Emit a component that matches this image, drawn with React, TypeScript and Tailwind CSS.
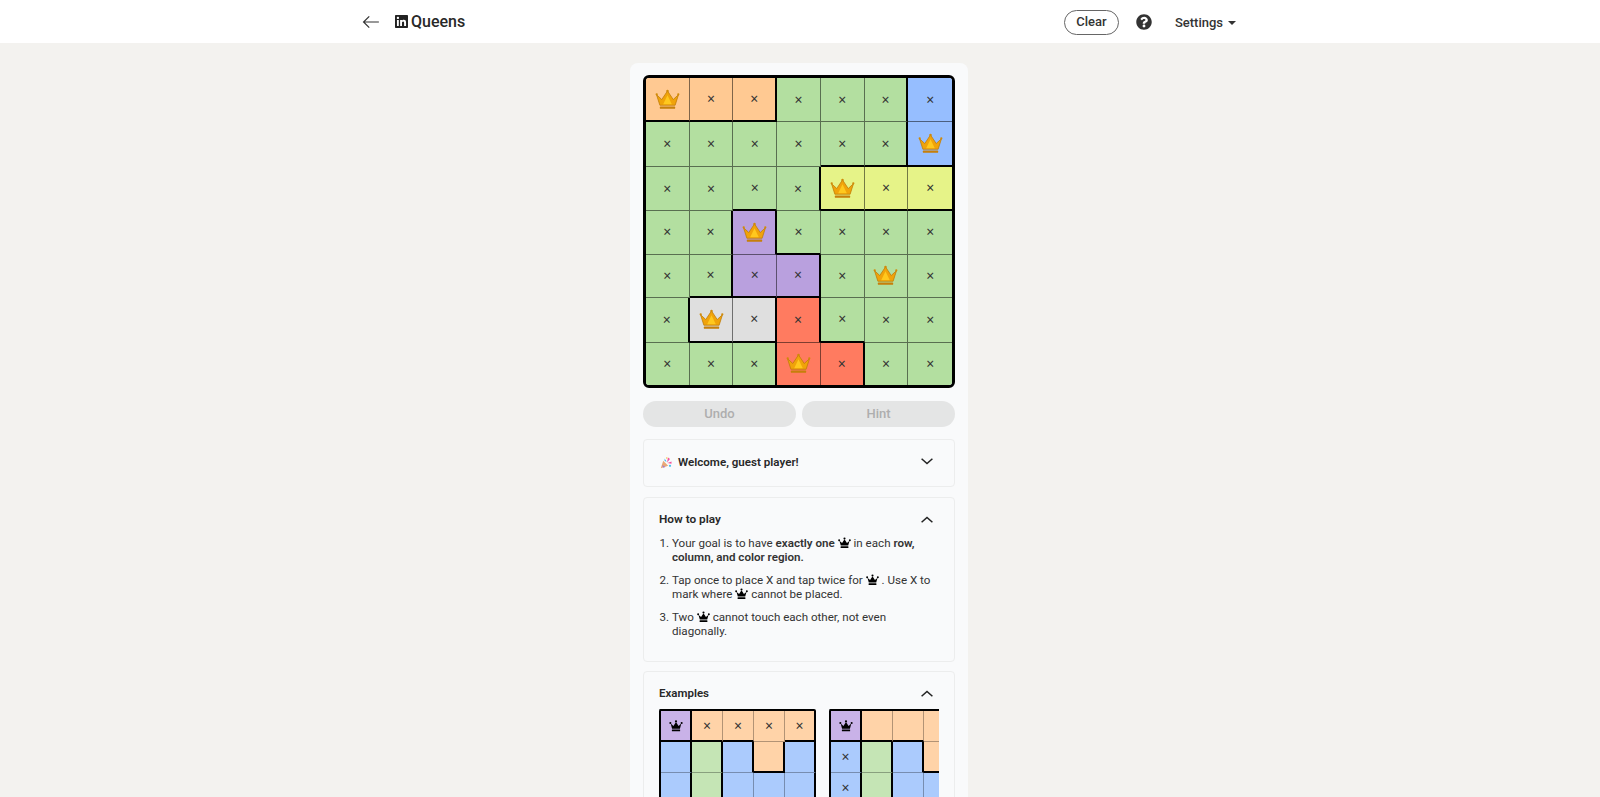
import React from 'react';

const GOLD_BOARD = [
  'OOOGGGB',
  'GGGGGGB',
  'GGGGYYY',
  'GGPGGGG',
  'GGPPGGG',
  'GWWRGGG',
  'GGGRRGG',
];
const GOLD_QUEENS = ['0,0', '1,6', '2,4', '3,2', '4,5', '5,1', '6,3'];

const EX_ROWS = ['POOOO', 'BGBOB', 'BGBBB'];

const bgFor: Record<string, string> = {
  O: 'bg-[#ffc992]',
  G: 'bg-[#b3dfa0]',
  B: 'bg-[#96beff]',
  Y: 'bg-[#e6f388]',
  P: 'bg-[#b9a0de]',
  W: 'bg-[#dfdfdf]',
  R: 'bg-[#ff7b60]',
};

const lightBgFor: Record<string, string> = {
  O: 'bg-[#ffd3a8]',
  G: 'bg-[#c5e5b5]',
  B: 'bg-[#abcbfd]',
  P: 'bg-[#c9b2e8]',
};

const GoldCrown = () => (
  <svg viewBox="0 0 26 22" className="w-[25px] h-[21px]">
    <path
      d="M1.500 6 L7 11 L13 2 L19 11 L24.500 6 L21 17 H5 Z"
      fill="#f0a30a"
      stroke="#bf7a05"
      strokeWidth="0.8"
      strokeLinejoin="round"
    />
    <path d="M8.500 16 L13 6.500 L17.500 16 Z" fill="#ffc81e" />
    <circle cx="13" cy="2" r="1.300" fill="#d08a08" />
    <circle cx="1.700" cy="5.600" r="1.200" fill="#d08a08" />
    <circle cx="24.300" cy="5.600" r="1.200" fill="#d08a08" />
    <rect x="5" y="18.400" width="16" height="2.400" rx="0.600" fill="#c67f0a" />
  </svg>
);

const BlackCrown = ({ className }: { className: string }) => (
  <svg viewBox="0 0 16 14" className={className} fill="#000">
    <circle cx="8" cy="1.500" r="1.300" />
    <circle cx="1.400" cy="3.600" r="1.200" />
    <circle cx="14.600" cy="3.600" r="1.200" />
    <path d="M1.800 4.200 L5 7 L8 2.400 L11 7 L14.200 4.200 L12.600 10.200 H3.400 Z" />
    <rect x="3.200" y="11" width="9.600" height="2.200" rx="0.500" />
  </svg>
);

const InlineCrown = () => <BlackCrown className="inline w-[13px] h-[12px] -mt-[4px] align-[-2px]" />;

const Cross = () => <span className="font-['Noto_Sans',sans-serif] text-[14px] leading-none text-[#333]">×</span>;

const Chevron = ({ up }: { up?: boolean }) => (
  <svg viewBox="0 0 12 7" className="w-[12px] h-[7px] shrink-0 -mt-[2px]" fill="none" stroke="#222" strokeWidth="1.500">
    <path d={up ? 'M.6 6.200 L6 1.400 L11.400 6.200' : 'M.6 .8 L6 5.600 L11.400 .8'} />
  </svg>
);

const PartyPopper = () => (
  <svg viewBox="0 0 12 12" className="w-[12px] h-[12px]">
    <path d="M.8 11.200 L3.200 3.800 L8.200 8.800 Z" fill="#e9a877" />
    <path d="M2 8 L5.400 10 L3.400 10.800 Z" fill="#9a78d8" />
    <path d="M4.600 1.500 L6.600 4.800 L4.600 4 Z" fill="#29aee8" />
    <path d="M8 .5 L10 2 L7 5.500 Z" fill="#f4509c" />
    <path d="M7.500 6 L11.500 4.500 L11.500 6.800 Z" fill="#f4509c" />
    <circle cx="10" cy="8.800" r="1.100" fill="#45bff0" />
    <circle cx="6.800" cy="1" r="0.800" fill="#f6c343" />
  </svg>
);

const QuestionCircle = () => (
  <svg viewBox="0 0 512 512" className="w-4 h-4" fill="#333">
    <path d="M504 256c0 137-111 248-248 248S8 393 8 256 119 8 256 8s248 111 248 248zM262.700 90c-54.500 0-89.300 23-116.600 63.800-3.500 5.300-2.400 12.400 2.700 16.300l34.700 26.300c5.200 3.900 12.600 3 16.700-2.100 17.900-22.700 30.100-35.800 57.300-35.800 20.400 0 45.700 13.100 45.700 32.900 0 15-12.400 22.700-32.600 34-23.600 13.200-54.800 29.700-54.800 70.900V300c0 6.600 5.400 12 12 12h56c6.600 0 12-5.400 12-12v-1.300c0-28.600 83.500-29.800 83.500-107.200C379.300 133.200 318.800 90 262.700 90zM256 339.200c-25.500 0-46.200 20.700-46.200 46.200 0 25.500 20.700 46.200 46.200 46.200s46.200-20.700 46.200-46.200c0-25.500-20.700-46.200-46.200-46.200z" />
  </svg>
);

function GoldBoard() {
  return (
    <div className="grid grid-cols-7 w-[312px] h-[313px] border-[3px] border-black rounded-[6px] overflow-hidden">
      {GOLD_BOARD.map((row, r) =>
        row.split('').map((c, k) => {
          const lastCol = k === 6;
          const lastRow = r === 6;
          const rightThick = !lastCol && row[k + 1] !== c;
          const bottomThick = !lastRow && GOLD_BOARD[r + 1][k] !== c;
          return (
            <div
              key={`${r}-${k}`}
              className={`flex items-center justify-center ${bgFor[c]} ${
                lastCol ? '' : rightThick ? 'border-r-2 border-r-black' : 'border-r border-r-black/50'
              } ${lastRow ? '' : bottomThick ? 'border-b-2 border-b-black' : 'border-b border-b-black/50'}`}
            >
              {GOLD_QUEENS.includes(`${r},${k}`) ? <GoldCrown /> : <Cross />}
            </div>
          );
        })
      )}
    </div>
  );
}

function ExampleBoard({ marks }: { marks: string[] }) {
  return (
    <div className="shrink-0 grid grid-cols-[repeat(5,31px)] auto-rows-[31px] w-[157px] border-t-2 border-l-2 border-black rounded-tl-[2px] rounded-tr-[2px] overflow-hidden">
      {EX_ROWS.map((row, r) =>
        row.split('').map((c, k) => {
          const rightThick = k === row.length - 1 || row[k + 1] !== c;
          const bottomThick = EX_ROWS[r + 1] ? EX_ROWS[r + 1][k] !== c : false;
          const key = `${r},${k}`;
          return (
            <div
              key={key}
              className={`flex items-center justify-center ${lightBgFor[c]} ${
                rightThick ? 'border-r-2 border-r-black' : 'border-r border-r-black/30'
              } ${bottomThick ? 'border-b-2 border-b-black' : 'border-b border-b-black/30'}`}
            >
              {r === 0 && k === 0 ? (
                <BlackCrown className="w-[14px] h-[12px]" />
              ) : marks.includes(key) ? (
                <Cross />
              ) : null}
            </div>
          );
        })
      )}
    </div>
  );
}

export default function App() {
  return (
    <div className="h-[797px] overflow-hidden bg-[#f3f2ef] font-['Roboto',sans-serif] text-[#282828]">
      <header className="h-[43px] bg-white flex items-center pl-[362px] pr-[364px]">
        <svg viewBox="0 0 20 16" className="w-[18px] h-[14px]" fill="none" stroke="#333" strokeWidth="1.400">
          <path d="M19 8 H1.500 M8 1.500 L1.500 8 L8 14.500" />
        </svg>
        <svg viewBox="0 0 16 16" className="ml-[15px] w-[13px] h-[13px]" fill="#222">
          <path d="M14.800 0H1.200C.5 0 0 .5 0 1.200v13.600C0 15.500.5 16 1.200 16h13.600c.7 0 1.200-.5 1.200-1.200V1.200C16 .5 15.500 0 14.800 0zM4.700 13.600H2.400V6h2.300v7.600zM3.600 5C2.800 5 2.200 4.400 2.200 3.600s.6-1.400 1.400-1.400 1.400.6 1.400 1.400S4.400 5 3.600 5zm10 8.600h-2.400V9.900c0-.9 0-2-1.200-2s-1.400 1-1.400 2v3.700H6.300V6h2.300v1c.3-.6 1.100-1.200 2.200-1.200 2.400 0 2.800 1.600 2.800 3.600v4.200z" />
        </svg>
        <h1 className="ml-[3px] text-[16px] font-medium">Queens</h1>
        <button className="ml-auto mt-[1px] h-[25px] w-[55px] rounded-full border border-[#666] bg-white text-[13px] font-medium text-[#333]">
          Clear
        </button>
        <span className="ml-[17px]">
          <QuestionCircle />
        </span>
        <button className="ml-[23px] mt-[2px] flex items-center text-[13px] font-medium text-[#333]">
          Settings
          <span className="ml-[5px] w-0 h-0 border-x-[4px] border-x-transparent border-t-[4px] border-t-[#333]" />
        </button>
      </header>

      <main className="flex justify-center pt-[20px] pr-[2px]">
        <div className="w-[338px] rounded-t-lg bg-[#f9fafb] px-[13px] pt-[12px]">
          <GoldBoard />

          <div className="mt-[13px] flex gap-[6px]">
            <button className="h-[26px] flex-1 rounded-full bg-[#e4e5e5] text-[13px] font-medium text-[#aeaeae]">Undo</button>
            <button className="h-[26px] flex-1 rounded-full bg-[#e4e5e5] text-[13px] font-medium text-[#aeaeae]">Hint</button>
          </div>

          <section className="mt-[12px] h-[48px] rounded border border-[#eceded] flex items-center pl-[16px] pr-[21px] pb-[1px]">
            <PartyPopper />
            <span className="ml-[6px] text-[11.6px] font-semibold">Welcome, guest player!</span>
            <span className="ml-auto">
              <Chevron />
            </span>
          </section>

          <section className="mt-[10px] h-[165px] rounded border border-[#eceded] pl-[15px] pr-[21px] pt-[14px]">
            <div className="flex items-center justify-between h-[16px]">
              <h2 className="text-[11.8px] font-semibold">How to play</h2>
              <Chevron up />
            </div>
            <ol className="mt-[9px] list-decimal pl-[13px] text-[11.6px] leading-[13.6px] text-[#333]">
              <li className="mb-[10px]">
                Your goal is to have <b className="font-semibold">exactly one</b> <InlineCrown /> in each{' '}
                <b className="font-semibold">row, column, and color region.</b>
              </li>
              <li className="mb-[10px]">
                Tap once to place X and tap twice for <InlineCrown /> . Use X to mark where <InlineCrown /> cannot be
                placed.
              </li>
              <li>
                Two <InlineCrown /> cannot touch each other, not even diagonally.
              </li>
            </ol>
          </section>

          <section className="mt-[9px] h-[200px] rounded border border-[#eceded] pl-[15px] pr-[21px] pt-[14px]">
            <div className="flex items-center justify-between h-[16px]">
              <h2 className="text-[11.5px] font-semibold">Examples</h2>
              <Chevron up />
            </div>
            <div className="mt-[7px] w-[280px] flex gap-[13px] overflow-hidden">
              <ExampleBoard marks={['0,1', '0,2', '0,3', '0,4']} />
              <ExampleBoard marks={['1,0', '2,0']} />
            </div>
          </section>
        </div>
      </main>
    </div>
  );
}
